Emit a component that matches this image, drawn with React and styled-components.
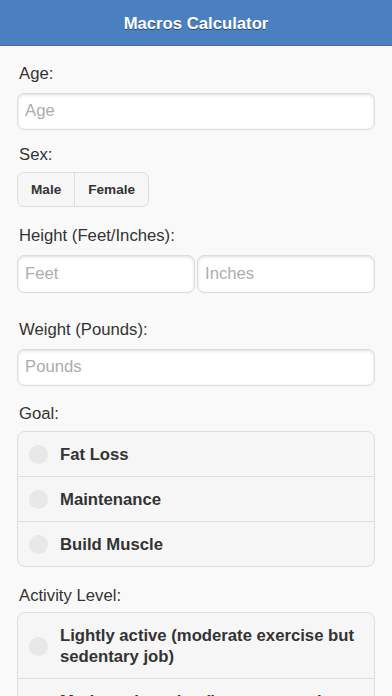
import React from "react";
import styled, { createGlobalStyle } from "styled-components";

const Global = createGlobalStyle`
  html, body {
    margin: 0;
    padding: 0;
    background: #f9f9f9;
  }
  body {
    font-family: "Liberation Sans", Arial, Helvetica, sans-serif;
    color: #333;
    -webkit-font-smoothing: antialiased;
  }
  * { box-sizing: border-box; }
`;

const Page = styled.div`
  min-height: 696px;
  background: #f9f9f9;
`;

const Header = styled.header`
  height: 46px;
  background: #4a7fc1;
  border-bottom: 1px solid #44699a;
  padding-top: 3px;
  text-align: center;
`;

const Title = styled.h1`
  margin: 0;
  font-size: 16.7px;
  line-height: 42px;
  font-weight: 700;
  color: #fff;
  text-shadow: 0 1px 0 rgba(0, 0, 0, 0.45);
`;

const Content = styled.main`
  padding: 17px 17px 20px;
`;

const Label = styled.label`
  display: block;
  margin-top: ${(p) => p.$mt || 0}px;
  font-size: 16.7px;
  line-height: 21px;
  color: #333;
  padding-left: 2px;
`;

const TextInput = styled.input`
  display: block;
  width: 100%;
  height: 37.5px;
  margin-top: ${(p) => p.$mt || 0}px;
  padding: 0 7px;
  background: #fff;
  border: 1px solid #dcdcdc;
  border-radius: 7px;
  box-shadow: inset 0 1px 3px rgba(0, 0, 0, 0.14);
  font-family: "Liberation Sans", Arial, sans-serif;
  font-size: 16.7px;
  color: #333;
  outline: none;
  &::placeholder {
    color: #adadad;
  }
`;

const Pair = styled.div`
  display: grid;
  grid-template-columns: 1fr 1fr;
  gap: 2px;
  margin-top: ${(p) => p.$mt || 0}px;
`;

const Segmented = styled.div`
  display: inline-flex;
  margin-top: ${(p) => p.$mt || 0}px;
  border: 1px solid #dddddd;
  border-radius: 7px;
  overflow: hidden;
  background: #f6f6f6;
`;

const SegButton = styled.button`
  height: 33px;
  padding: 0 13px;
  border: none;
  border-left: ${(p) => (p.$first ? "none" : "1px solid #dddddd")};
  background: #f6f6f6;
  font-family: "Liberation Sans", Arial, sans-serif;
  font-size: 13.6px;
  font-weight: 700;
  color: #333;
  cursor: pointer;
`;

const List = styled.div`
  margin-top: ${(p) => p.$mt || 0}px;
  border: 1px solid #dddddd;
  border-radius: 8px;
  background: #f6f6f6;
  overflow: hidden;
`;

const Option = styled.div`
  display: flex;
  align-items: center;
  padding: 12px 16px 11px 11px;
  border-top: ${(p) => (p.$first ? "none" : "1px solid #dddddd")};
  cursor: pointer;
`;

const Dot = styled.span`
  flex: 0 0 19px;
  width: 19px;
  height: 19px;
  border-radius: 50%;
  background: #e8e8e8;
  margin-right: 12px;
`;

const OptionText = styled.span`
  font-size: 16.7px;
  line-height: 21px;
  font-weight: 700;
  color: #333;
`;

const goals = ["Fat Loss", "Maintenance", "Build Muscle"];
const activities = [
  "Lightly active (moderate exercise but sedentary job)",
  "Moderately active (intense exercise and sedentary job)",
  "Very active (moderate exercise and active job)",
  "Extra active (intense exercise and active job)",
];

export default function App() {
  return (
    <Page>
      <Global />
      <Header>
        <Title>Macros Calculator</Title>
      </Header>
      <Content>
        <Label>Age:</Label>
        <TextInput $mt={8.5} placeholder="Age" />

        <Label $mt={14}>Sex:</Label>
        <Segmented $mt={7}>
          <SegButton $first>Male</SegButton>
          <SegButton>Female</SegButton>
        </Segmented>

        <Label $mt={18}>Height (Feet/Inches):</Label>
        <Pair $mt={9}>
          <TextInput placeholder="Feet" />
          <TextInput placeholder="Inches" />
        </Pair>

        <Label $mt={26.5}>Weight (Pounds):</Label>
        <TextInput $mt={8.5} placeholder="Pounds" />

        <Label $mt={17}>Goal:</Label>
        <List $mt={7}>
          {goals.map((g, i) => (
            <Option key={g} $first={i === 0}>
              <Dot />
              <OptionText>{g}</OptionText>
            </Option>
          ))}
        </List>

        <Label $mt={18}>Activity Level:</Label>
        <List $mt={6}>
          {activities.map((a, i) => (
            <Option key={a} $first={i === 0}>
              <Dot />
              <OptionText>{a}</OptionText>
            </Option>
          ))}
        </List>
      </Content>
    </Page>
  );
}
